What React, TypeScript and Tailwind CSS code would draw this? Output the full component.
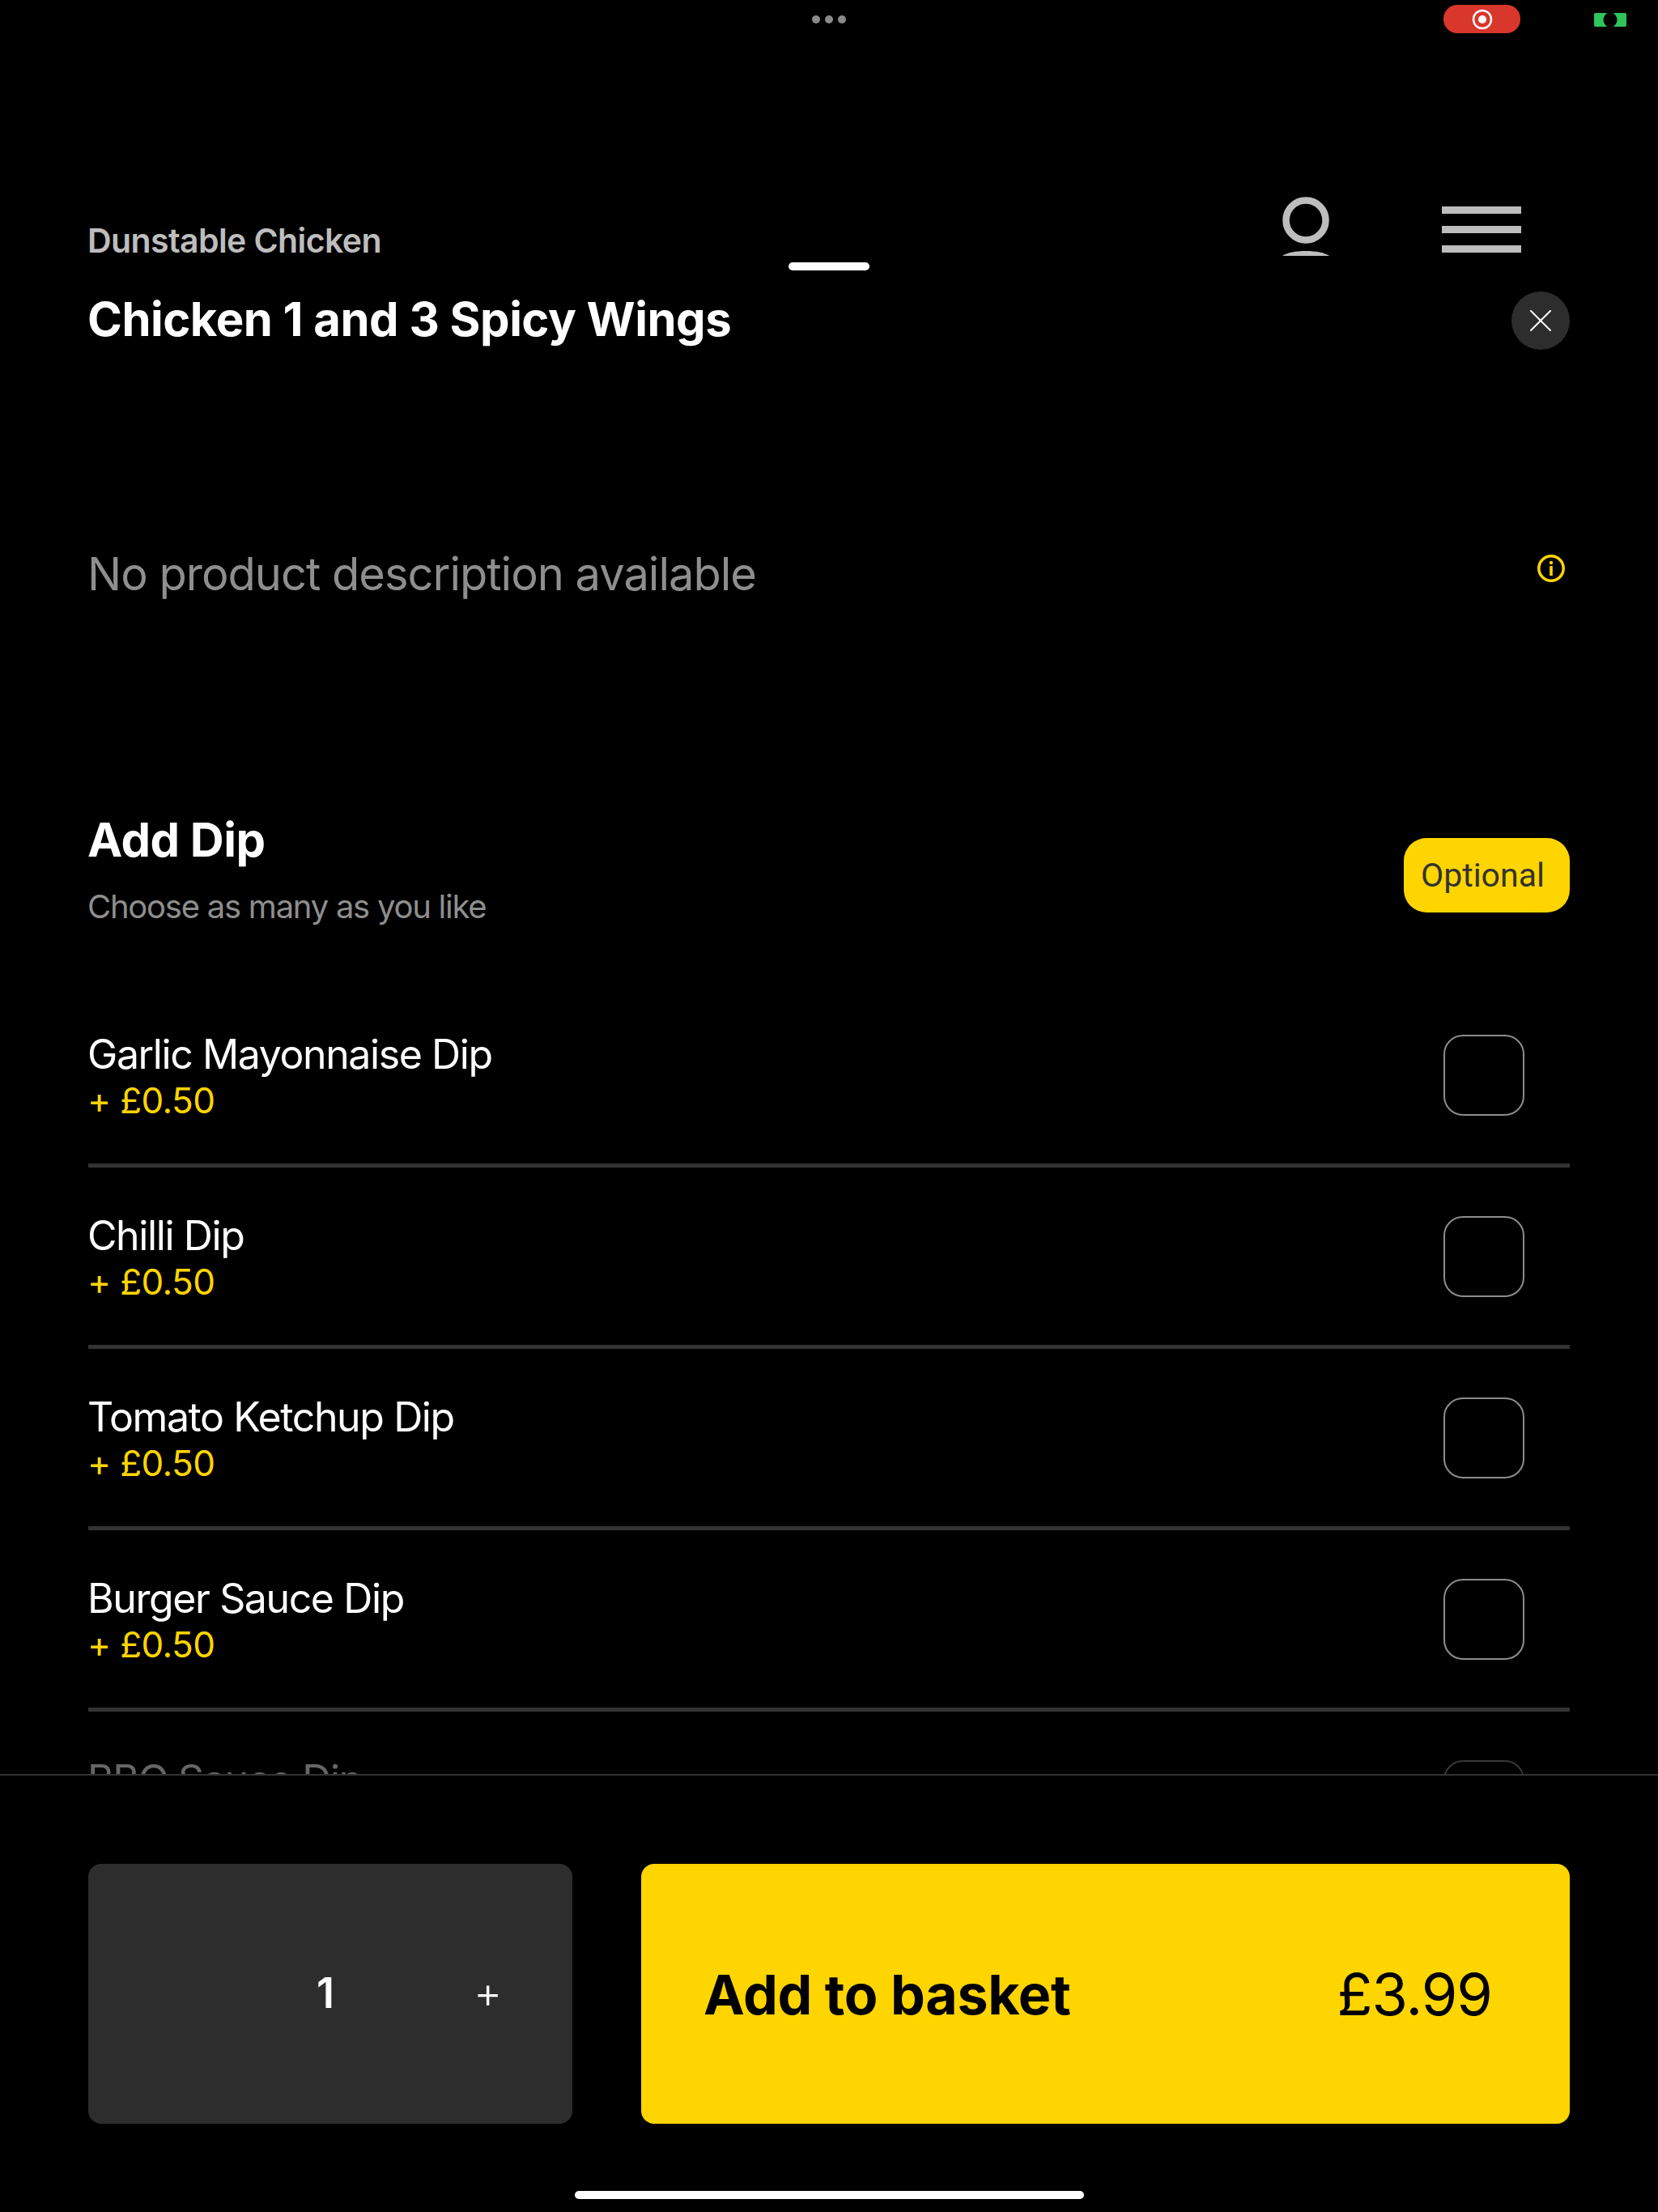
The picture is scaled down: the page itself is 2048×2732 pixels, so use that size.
const dips = [
  { name: "Garlic Mayonnaise Dip", price: "+ £0.50" },
  { name: "Chilli Dip", price: "+ £0.50" },
  { name: "Tomato Ketchup Dip", price: "+ £0.50" },
  { name: "Burger Sauce Dip", price: "+ £0.50" },
  { name: "BBQ Sauce Dip", price: "+ £0.50" },
];

function StatusBar() {
  return (
    <div className="relative flex h-[48px] items-start justify-center pt-[19px]">
      <div className="flex gap-[6px]">
        <span className="size-[10px] rounded-full bg-[#8a8a8a]" />
        <span className="size-[10px] rounded-full bg-[#8a8a8a]" />
        <span className="size-[10px] rounded-full bg-[#8a8a8a]" />
      </div>
      <div className="absolute left-[1783px] top-[6px] flex h-[35px] w-[95px] items-center justify-center rounded-[17px] bg-[#d9372c]">
        <svg width="26" height="26" viewBox="0 0 26 26">
          <circle cx="13" cy="13" r="11" fill="none" stroke="#fff" strokeWidth="2.5" />
          <circle cx="13" cy="13" r="5" fill="#fff" />
        </svg>
      </div>
      <svg className="absolute left-[1969px] top-[16px]" width="40" height="17" viewBox="0 0 40 17" fill="#2fc45c">
        <path d="M2 0h14Q7 8.500 16 17H2a2 2 0 0 1-2-2V2a2 2 0 0 1 2-2z" />
        <path d="M38 0H24Q33 8.500 24 17h14a2 2 0 0 0 2-2V2a2 2 0 0 0-2-2z" />
      </svg>
    </div>
  );
}

function Header() {
  return (
    <div className="relative mt-[192px] flex h-[120px] items-start justify-between pl-[109px] pr-[169px]">
      <p className="-ml-px mt-[33px] text-[41px] font-semibold leading-[48px] tracking-[-0.6px] text-[#bdbdbd]">Dunstable Chicken</p>
      <div className="flex items-start gap-[139px]">
        <svg className="mt-[3px]" width="58" height="73" viewBox="0 0 58 73" fill="#bdbdbd">
          <circle cx="29" cy="29" r="24.500" fill="none" stroke="#bdbdbd" strokeWidth="8.500" />
          <path d="M0 73c6-4 16-6 29-6s23 2 29 6z" />
        </svg>
        <div className="mt-[15px] flex w-[98px] flex-col gap-[15px]">
          <span className="h-[9px] bg-[#bdbdbd]" />
          <span className="h-[9px] bg-[#bdbdbd]" />
          <span className="h-[9px] bg-[#bdbdbd]" />
        </div>
      </div>
      <span className="absolute left-[974px] top-[84px] h-[10px] w-[100px] rounded-full bg-white" />
    </div>
  );
}

function DipRow({ name, price, dim }: { name: string; price: string; dim?: boolean }) {
  return (
    <div className={`flex h-[224px] shrink-0 items-center justify-between border-b-[5px] border-[#333333] ${dim ? "opacity-40" : ""}`}>
      <div className="-ml-px mt-[4px]">
        <p className="text-[50px] font-normal leading-[58px] tracking-[-1.4px] text-white">{name}</p>
        <p className="text-[44px] font-normal leading-[56px] tracking-[-0.6px] text-[#ffd500]">{price}</p>
      </div>
      <span className="mr-[56px] size-[100px] rounded-[24px] border-2 border-[#8c8c8c]" />
    </div>
  );
}

export default function App() {
  return (
    <div className="flex h-[2732px] w-[2048px] flex-col overflow-hidden bg-black font-[Inter,sans-serif]">
      <StatusBar />
      <Header />
      <div className="flex flex-1 flex-col overflow-hidden pl-[109px] pr-[109px]">
        <div className="flex h-[72px] shrink-0 items-center justify-between">
          <h1 className="-ml-px -mt-[4px] text-[58px] font-bold leading-[72px] tracking-[-0.5px] text-white">Chicken 1 and 3 Spicy Wings</h1>
          <button className="flex size-[72px] items-center justify-center rounded-full bg-[#2d2d2d]">
            <svg width="26" height="26" viewBox="0 0 26 26" stroke="#fff" strokeWidth="2" strokeLinecap="round">
              <path d="M1 1l24 24M25 1L1 25" />
            </svg>
          </button>
        </div>

        <div className="mt-[224px] flex h-[100px] shrink-0 items-start justify-between">
          <p className="-ml-px mt-[3px] text-[56px] font-normal leading-[100px] tracking-[-1px] text-[#8e8e8e]">No product description available</p>
          <svg className="mr-[6px] mt-[29px]" width="34" height="34" viewBox="0 0 34 34" fill="none">
            <circle cx="17" cy="17" r="15.200" stroke="#ffd500" strokeWidth="3.500" />
            <circle cx="17" cy="10" r="2.200" fill="#ffd500" />
            <rect x="15.200" y="14" width="3.600" height="12" fill="#ffd500" />
          </svg>
        </div>

        <div className="mt-[240px] flex h-[160px] shrink-0 items-center justify-between">
          <div className="-ml-px -mt-[6px]">
            <h2 className="text-[58px] font-bold leading-[70px] tracking-[-0.5px] text-white">Add Dip</h2>
            <p className="mt-[24px] text-[40px] font-normal leading-[48px] tracking-[-1.25px] text-[#8e8e8e]">Choose as many as you like</p>
          </div>
          <span className="mt-[10px] flex h-[92px] w-[205px] items-center rounded-[28px] bg-[#ffd500] pl-[21px] pt-[2px] font-[Roboto,sans-serif] text-[41px] text-[#333333]">
            Optional
          </span>
        </div>

        <div className="mt-[62px] flex flex-col">
          {dips.map((dip, i) => (
            <DipRow key={dip.name} name={dip.name} price={dip.price} dim={i === 4} />
          ))}
        </div>
      </div>

      <div className="relative h-[541px] shrink-0 border-t-2 border-[#333333] pl-[109px] pr-[109px] pt-[109px]">
        <div className="flex gap-[85px]">
          <div className="flex h-[321px] w-[598px] items-center rounded-[16px] bg-[#2d2d2d] text-white">
            <span className="ml-[282px] -mt-[2px] text-[52px] font-semibold leading-none">1</span>
            <span className="ml-[172px] -mt-[4px] text-[54px] font-light leading-none">+</span>
          </div>
          <button className="flex h-[321px] flex-1 items-center justify-between rounded-[16px] bg-[#ffd500] pl-[77px] pr-[96px] text-black">
            <span className="text-[68px] font-bold leading-none tracking-[-0.3px]">Add to basket</span>
            <span className="text-[72px] font-normal leading-none tracking-[-1px]">£3.99</span>
          </button>
        </div>
        <span className="absolute bottom-[16px] left-[710px] h-[10px] w-[629px] rounded-full bg-white" />
      </div>
    </div>
  );
}
